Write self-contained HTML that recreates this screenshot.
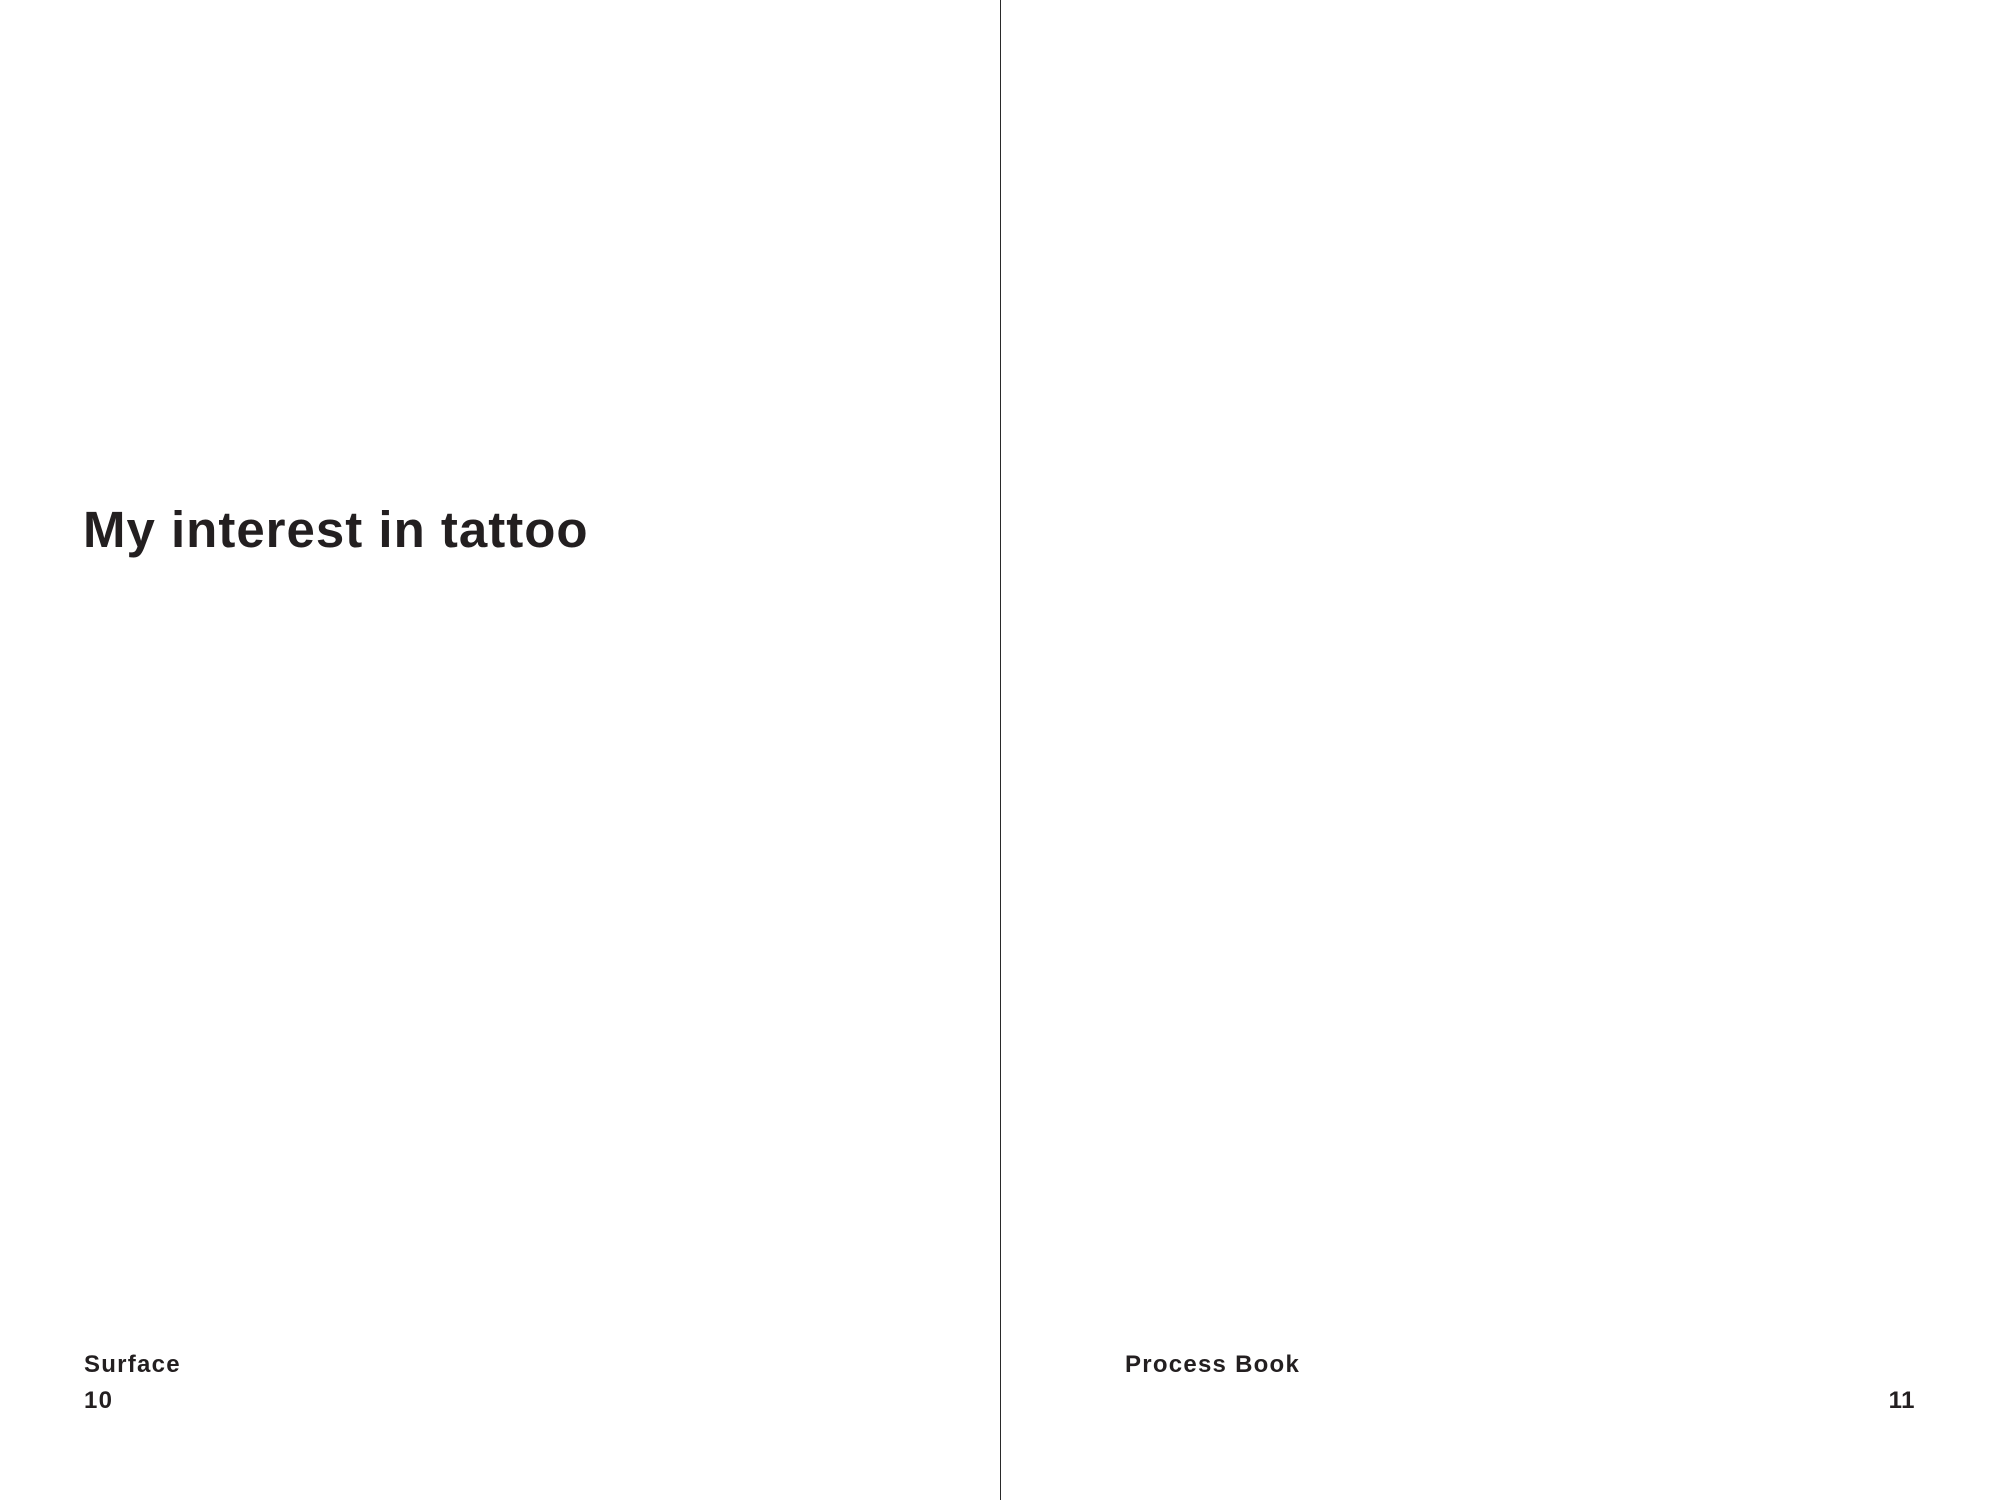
<!DOCTYPE html>
<html><head><meta charset="utf-8"><style>
html,body{margin:0;padding:0;background:#fff;}
body{width:2000px;height:1500px;position:relative;overflow:hidden;font-family:"Liberation Sans",Arial,sans-serif;font-weight:bold;color:#231f20;}
.t{position:absolute;white-space:nowrap;line-height:1;}
.s{font-size:24px;line-height:24px;letter-spacing:1.25px;}
.line{position:absolute;left:1000px;top:0;width:1px;height:1500px;background:#2a2a2a;}
</style></head><body>
<div class="line"></div>
<div class="t" style="left:83px;top:504px;font-size:51px;line-height:51px;letter-spacing:1px;">My interest in tattoo</div>
<div class="t s" style="left:84px;top:1353px;">Surface</div>
<div class="t s" style="left:84px;top:1389px;">10</div>
<div class="t s" style="left:1125px;top:1353px;">Process Book</div>
<div class="t s" style="right:85px;top:1389px;letter-spacing:0.5px;">11</div>
</body></html>
